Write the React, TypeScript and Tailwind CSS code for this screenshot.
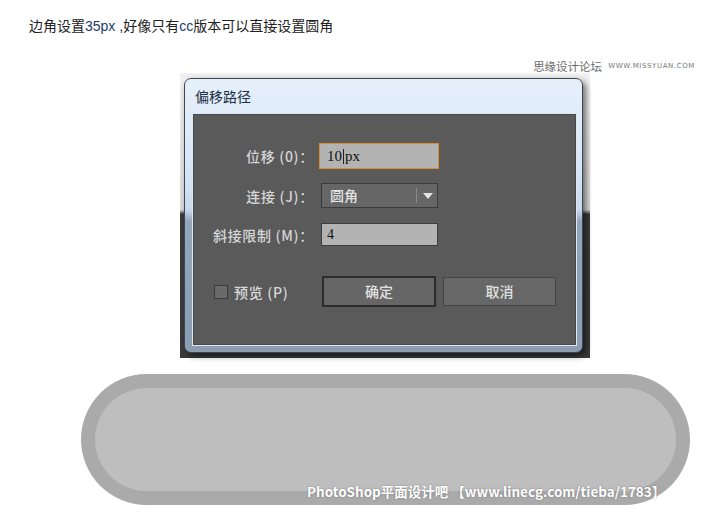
import React from "react";

const cjk = { fontFamily: '"Noto Sans CJK SC", "Noto Sans", sans-serif' };
const serifCjk = { fontFamily: '"Liberation Serif", "Noto Sans CJK SC", serif' };

function Label({ children }: { children: React.ReactNode }) {
  return (
    <div className="w-[125px] shrink-0 pr-[5px] text-right text-[14px] leading-[18px] font-medium tracking-[0.7px] text-[#d6d6d6]" style={cjk}>
      {children}
    </div>
  );
}

export default function App() {
  return (
    <div className="relative h-[510px] w-[715px] overflow-hidden bg-white">
      {/* top caption */}
      <div className="pl-[29px] pt-[16px] text-[14px] leading-[18px] text-[#222]" style={cjk}>
        边角设置<span className="text-[#233a6a]" style={{ fontFamily: '"Liberation Sans", sans-serif' }}>35px</span>
        <span style={{ fontFamily: '"Liberation Sans", sans-serif' }}> ,</span>好像只有
        <span className="text-[#233a6a]" style={{ fontFamily: '"Liberation Sans", sans-serif' }}>cc</span>版本可以直接设置圆角
      </div>

      {/* site watermark */}
      <div className="mt-[24px] flex h-[14px] items-center justify-end pr-[20px]">
        <span className="text-[11.5px] leading-[14px] text-[#6a6a6a]" style={cjk}>思缘设计论坛</span>
        <span className="ml-[6px] text-[7px] leading-[14px] tracking-[0.6px] text-[#777]" style={{ fontFamily: '"DejaVu Sans", sans-serif' }}>
          WWW.MISSYUAN.COM
        </span>
      </div>

      {/* screenshot */}
      <div className="ml-[180px] h-[285px] w-[410px] bg-[linear-gradient(to_bottom,#f2f2f2_0%,#dadada_48%,#3c3c3c_49.5%,#3a3a3a_100%)] pl-[4px] pt-[5px]">
        <div className="flex h-[275px] w-[399px] flex-col rounded-[7px] border border-[#3d4654] bg-[linear-gradient(to_bottom,#e6f0fb_0%,#d6e5f5_35%,#c8d9ec_48%,#93a6ba_52%,#8a9db2_100%)] shadow-[3px_3px_6px_rgba(0,0,0,0.55)]">
          <div className="flex h-[34px] shrink-0 items-center pl-[10px] text-[14px] text-[#1d2d44]" style={cjk}>
            偏移路径
          </div>
          <div className="ml-[7px] h-[233px] w-[385px] border border-[#dfe8f2] bg-[#5a5a5a]">
            <div className="h-full w-full border border-[#4a4a4a] pt-[28px]">
              {/* row 1 */}
              <div className="flex h-[26px] items-center">
                <Label>位移 (0)：</Label>
                <div className="flex h-[26px] w-[120px] items-center border border-[#e08a2a] bg-[#b3b3b3] pl-[7px] text-[15px] text-[#111]" style={serifCjk}>
                  10<span className="mx-[1px] inline-block h-[15px] w-[1px] bg-[#222]" />px
                </div>
              </div>
              {/* row 2 */}
              <div className="mt-[14px] flex h-[25px] items-center">
                <Label>连接 (J)：</Label>
                <div className="relative ml-[2px] flex h-[25px] w-[117px] items-center border border-[#3c3c3c] bg-[#666666] pl-[8px] text-[14px] font-medium text-[#e2e2e2]" style={cjk}>
                  圆角
                  <span className="absolute left-[94px] top-[4px] h-[15px] w-[1px] bg-[#8a8a8a]" />
                  <span className="absolute left-[101px] top-[9px] h-0 w-0 border-x-[5px] border-t-[6px] border-x-transparent border-t-[#e6e6e6]" />
                </div>
              </div>
              {/* row 3 */}
              <div className="mt-[15px] flex h-[23px] items-center">
                <Label>斜接限制 (M)：</Label>
                <div className="ml-[2px] flex h-[23px] w-[117px] items-center border border-[#3e3e3e] bg-[#b3b3b3] pl-[5px] text-[14px] text-[#111]" style={serifCjk}>
                  4
                </div>
              </div>
              {/* bottom row */}
              <div className="mt-[30px] flex items-start">
                <div className="ml-[20px] mt-[8px] flex w-[108px] shrink-0 items-center">
                  <div className="h-[14px] w-[14px] border border-[#3a3a3a] bg-[#6a6a6a]" />
                  <span className="ml-[6px] text-[14px] leading-[16px] font-medium tracking-[0.7px] text-[#d8d8d8]" style={cjk}>预览 (P)</span>
                </div>
                <div className="flex h-[31px] w-[114px] shrink-0 items-center justify-center border-2 border-[#2c2c2c] bg-[#666666] text-[14px] font-medium text-[#e2e2e2]" style={cjk}>
                  确定
                </div>
                <div className="ml-[7px] mt-[1px] flex h-[29px] w-[113px] shrink-0 items-center justify-center border border-[#444444] bg-[#676767] text-[14px] font-medium text-[#e2e2e2]" style={cjk}>
                  取消
                </div>
              </div>
            </div>
          </div>
        </div>
      </div>

      {/* rounded pill */}
      <div className="relative ml-[81px] mt-[16px] h-[131px] w-[609px] rounded-full bg-[#aaaaaa] p-[14px]">
        <div className="h-full w-full rounded-full bg-[#bebebe]" />
        <div
          className="absolute left-[226px] top-[108px] whitespace-nowrap text-[13.5px] font-bold leading-[18px] text-white [text-shadow:0_0_2px_rgba(0,0,0,0.35)]"
          style={cjk}
        >
          PhotoShop平面设计吧 【www.linecg.com/tieba/1783】
        </div>
      </div>
    </div>
  );
}
